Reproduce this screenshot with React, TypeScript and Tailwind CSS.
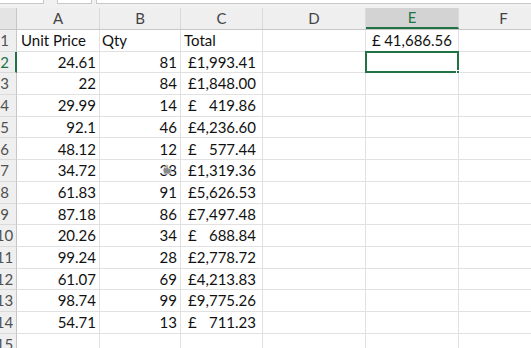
import React from 'react';

const cols = ['A', 'B', 'C', 'D', 'E', 'F'];
const widths = ['w-[83px]', 'w-[81px]', 'w-[82px]', 'w-[103px]', 'w-[93px]', 'w-[90px]'];

const data: [string, string, string][] = [
  ['24.61', '81', '1,993.41'],
  ['22', '84', '1,848.00'],
  ['29.99', '14', '419.86'],
  ['92.1', '46', '4,236.60'],
  ['48.12', '12', '577.44'],
  ['34.72', '38', '1,319.36'],
  ['61.83', '91', '5,626.53'],
  ['87.18', '86', '7,497.48'],
  ['20.26', '34', '688.84'],
  ['99.24', '28', '2,778.72'],
  ['61.07', '69', '4,213.83'],
  ['98.74', '99', '9,775.26'],
  ['54.71', '13', '711.23'],
];

const cell = 'h-full shrink-0 border-r border-b border-[#e1e1e1] flex items-center';

function RowHead({ n, active }: { n: number; active?: boolean }) {
  return (
    <div
      className={
        'h-full w-[17px] shrink-0 overflow-hidden bg-[#efefef] border-b border-[#dadada] ' +
        (active ? 'border-r-2 border-r-[#217346] text-[#217346]' : 'border-r border-r-[#c6c6c6] text-[#505050]')
      }
    >
      <div className="-ml-[10px] flex h-full w-[29px] items-center justify-center">{n}</div>
    </div>
  );
}

function Money({ v }: { v: string }) {
  return (
    <div className={cell + ' w-[82px] justify-between pl-[7px] pr-[6px]'}>
      <span>£</span>
      <span>{v}</span>
    </div>
  );
}

export default function App() {
  return (
    <div
      className="h-[348px] w-[531px] overflow-hidden bg-white text-[15px] text-[#111]"
      style={{ fontFamily: 'Lato, "Liberation Sans", sans-serif' }}
    >
      {/* formula bar remnant */}
      <div className="flex h-[8px] bg-[#f1f1f1]">
        <div className="h-[4px] w-[44px] border-r border-b border-[#c8c8c8] bg-white" />
        <div className="ml-[13px] h-[4px] w-[35px] border-x border-b border-[#c8c8c8] bg-white" />
        <div className="ml-[4px] h-[4px] flex-1 border-l border-b border-[#c8c8c8] bg-white" />
      </div>

      {/* column header */}
      <div className="flex h-[22px] border-b border-[#c6c6c6] bg-[#efefef] text-[#444]">
        <div className="h-full w-[17px] shrink-0 border-r border-[#c6c6c6] bg-[#e4e4e4]" />
        {cols.map((c, i) => (
          <div
            key={c}
            className={
              widths[i] +
              ' flex h-full shrink-0 items-center justify-center border-r border-[#dadada] ' +
              (c === 'E' ? 'border-b-2 border-b-[#217346] bg-[#d3d3d3] text-[#217346]' : '')
            }
          >
            {c}
          </div>
        ))}
      </div>

      {/* row 1 */}
      <div className="flex h-[21.7px]">
        <RowHead n={1} />
        <div className={cell + ' w-[83px] pl-[4px]'}>Unit Price</div>
        <div className={cell + ' w-[81px] pl-[2px]'}>Qty</div>
        <div className={cell + ' w-[82px] pl-[3px]'}>Total</div>
        <div className={cell + ' w-[103px]'} />
        <div className={cell + ' w-[93px] justify-between pl-[6px] pr-[6px]'}>
          <span>£</span>
          <span>41,686.56</span>
        </div>
        <div className={cell + ' w-[90px]'} />
      </div>

      {data.map((r, i) => (
        <div key={i} className="flex h-[21.7px]">
          <RowHead n={i + 2} active={i === 0} />
          <div className={cell + ' w-[83px] justify-end pr-[3px]'}>{r[0]}</div>
          <div className={cell + ' relative w-[81px] justify-end pr-[3px]'}>
            {r[1]}
            {i === 5 && (
              <svg className="absolute left-[62px] top-[4px]" width="10" height="11" viewBox="0 0 10 11">
                <path d="M2 10 L1 6 L2 3 L4 4 L4 1 L6 1 L6 4 L9 5 L9 9 L7 10 Z" fill="#8a8a8a" stroke="#e4e4e4" strokeWidth="0.8" />
              </svg>
            )}
          </div>
          <Money v={r[2]} />
          <div className={cell + ' w-[103px]'} />
          <div className={cell + ' relative w-[93px]'}>
            {i === 0 && (
              <div className="absolute -left-px -top-px h-[calc(100%+2px)] w-[calc(100%+2px)] border-2 border-[#217346]">
                <div className="absolute -bottom-[3px] -right-[3px] h-[4px] w-[4px] border border-white bg-[#217346]" />
              </div>
            )}
          </div>
          <div className={cell + ' w-[90px]'} />
        </div>
      ))}

      <div className="flex h-[21.7px]">
        <RowHead n={15} />
        <div className={cell + ' w-[83px]'} />
        <div className={cell + ' w-[81px]'} />
        <div className={cell + ' w-[82px]'} />
        <div className={cell + ' w-[103px]'} />
        <div className={cell + ' w-[93px]'} />
        <div className={cell + ' w-[90px]'} />
      </div>
    </div>
  );
}
